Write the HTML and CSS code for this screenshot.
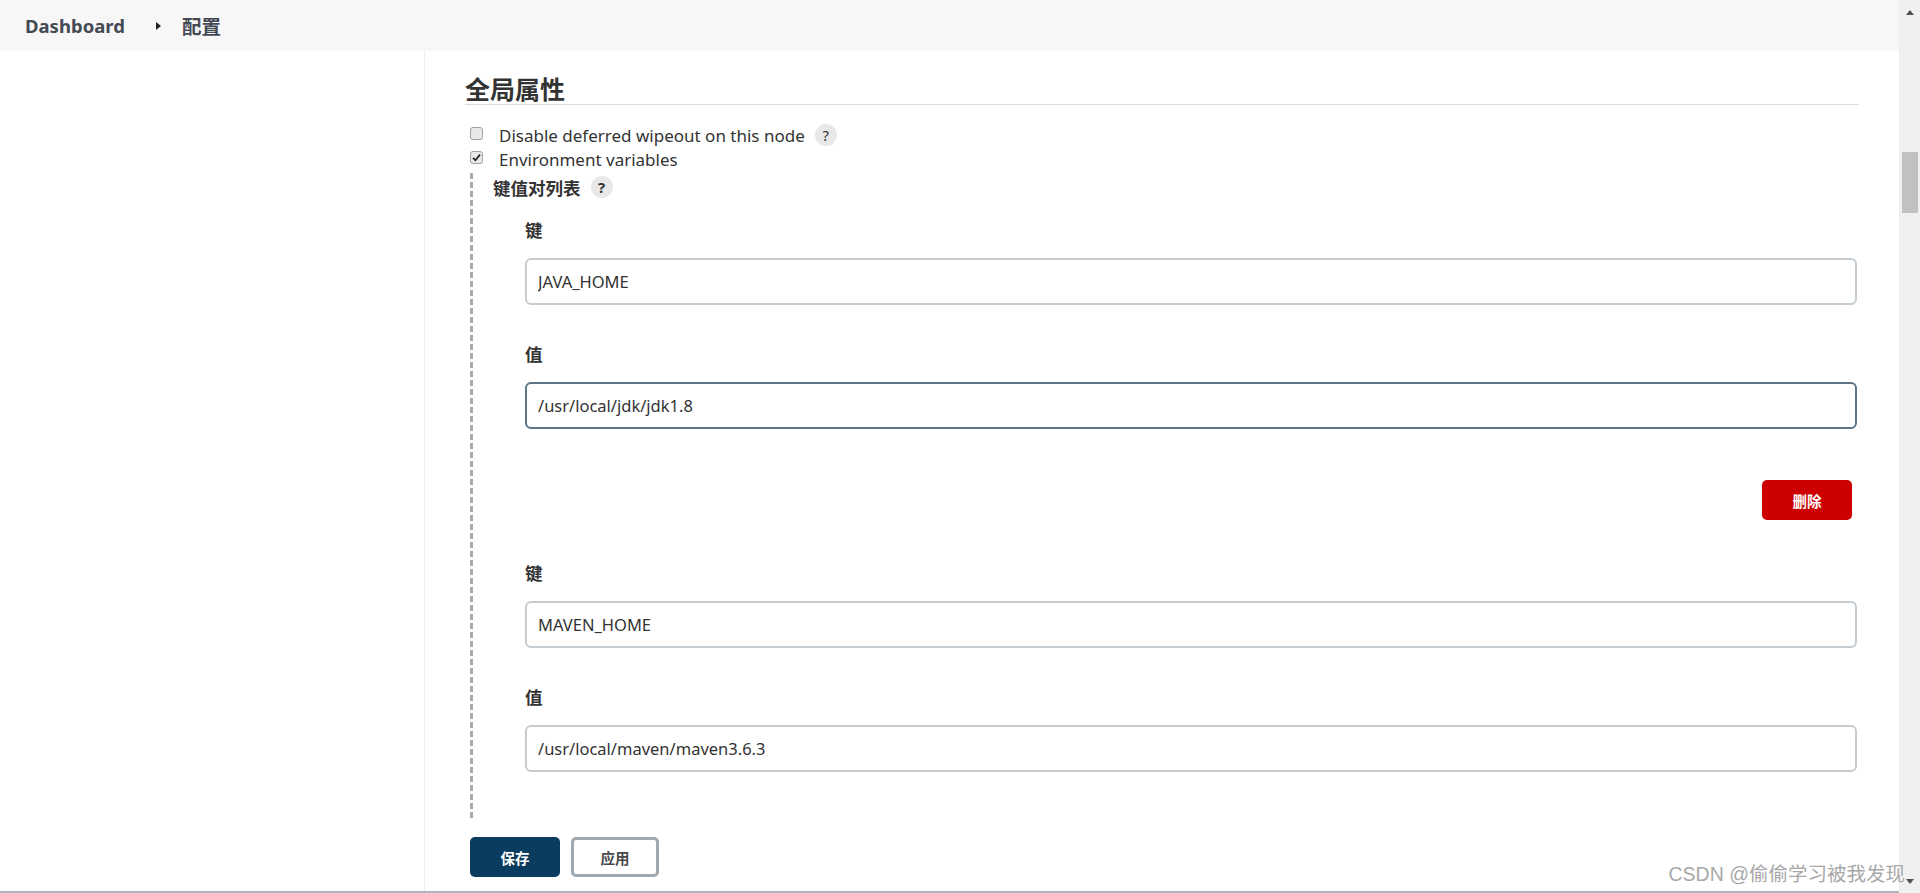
FILE: index.html
```html
<!DOCTYPE html>
<html lang="zh-CN">
<head>
<meta charset="utf-8">
<title>配置 [Jenkins]</title>
<link rel="stylesheet" href="styles.css">
</head>
<body>
<div class="page">
  <div class="app">
    <header class="topbar">
      <a class="crumb" href="#">Dashboard</a>
      <span class="crumb-sep"></span>
      <span class="crumb crumb-cjk">配置</span>
    </header>
    <div class="layout">
      <aside class="side"></aside>
      <main class="main">
        <h2 class="section-title">全局属性</h2>
        <div class="cb-row">
          <span class="cb"></span>
          <span class="cb-label">Disable deferred wipeout on this node</span>
          <span class="help">?</span>
        </div>
        <div class="cb-row">
          <span class="cb checked"><svg viewBox="0 0 13 13" width="13" height="13"><path d="M3 6.8 L5.4 9.2 L10 3.6" fill="none" stroke="#222" stroke-width="1.8"/></svg></span>
          <span class="cb-label">Environment variables</span>
        </div>
        <div class="nested">
          <div class="nested-title"><span>键值对列表</span><span class="help">?</span></div>
          <div class="entries">
            <div class="entry">
              <div class="field">
                <div class="field-label">键</div>
                <input class="text-input" type="text" value="JAVA_HOME">
              </div>
              <div class="field">
                <div class="field-label">值</div>
                <input class="text-input focused" type="text" value="/usr/local/jdk/jdk1.8">
              </div>
              <div class="entry-actions"><button class="btn btn-danger">删除</button></div>
            </div>
            <div class="entry entry-next">
              <div class="field">
                <div class="field-label">键</div>
                <input class="text-input" type="text" value="MAVEN_HOME">
              </div>
              <div class="field">
                <div class="field-label">值</div>
                <input class="text-input" type="text" value="/usr/local/maven/maven3.6.3">
              </div>
            </div>
          </div>
        </div>
        <div class="form-actions">
          <button class="btn btn-primary">保存</button>
          <button class="btn btn-secondary">应用</button>
        </div>
      </main>
    </div>
    <div class="bottom-line"></div>
  </div>
  <div class="scrollbar">
    <div class="sb-arrow sb-up"></div>
    <div class="sb-track"><div class="sb-thumb"></div></div>
    <div class="sb-arrow sb-down"></div>
  </div>
  <div class="watermark">CSDN @偷偷学习被我发现</div>
</div>
</body>
</html>
```
FILE: styles.css
```css
* { box-sizing: border-box; }
html, body { margin: 0; padding: 0; }
body {
  font-family: "Noto Sans", "Noto Sans CJK SC", sans-serif;
  color: #333;
  background: #fff;
  overflow: hidden;
}
.page {
  position: relative;
  display: flex;
  width: 1920px;
  height: 893px;
}
.app {
  flex: 1;
  display: flex;
  flex-direction: column;
  min-width: 0;
}
.topbar {
  height: 51px;
  flex: none;
  background: #f7f7f7;
  display: flex;
  align-items: center;
  padding-left: 25px;
}
.crumb {
  font-family: "Noto Sans", "Noto Sans CJK SC", sans-serif;
  font-size: 18.5px;
  font-weight: 700;
  color: #444a54;
  text-decoration: none;
  line-height: 24px;
}
.crumb-cjk {
  font-family: "Noto Sans CJK SC", sans-serif;
  font-size: 19.5px;
  font-weight: 700;
}
.crumb-sep {
  width: 0;
  height: 0;
  border-top: 4px solid transparent;
  border-bottom: 4px solid transparent;
  border-left: 5px solid #222;
  margin: 0 21px 0 31px;
}
.layout {
  flex: 1;
  display: flex;
  min-height: 0;
}
.side {
  width: 425px;
  flex: none;
  border-right: 1px solid #ececec;
}
.main {
  flex: 1;
  padding: 23px 40px 0 40px;
  min-width: 0;
}
.section-title {
  margin: 0;
  font-family: "Noto Sans CJK SC", sans-serif;
  font-size: 25px;
  font-weight: 700;
  line-height: 28px;
  padding-bottom: 2px;
  border-bottom: 1px solid #dcdcdc;
  color: #333;
}
.cb-row {
  display: flex;
  align-items: center;
  height: 24px;
}
.section-title + .cb-row { margin-top: 18px; }
.cb {
  width: 13px;
  height: 13px;
  margin-left: 5px;
  border: 1px solid #a0a0a0;
  border-radius: 3px;
  background: #e9e9e9;
  display: flex;
  align-items: center;
  justify-content: center;
  position: relative;
  top: -2px;
}
.cb svg { display: block; margin: -1px; }
.cb-label {
  margin-left: 16px;
  font-size: 17px;
  line-height: 24px;
  color: #333;
  position: relative;
  top: 1px;
}
.help {
  width: 22px;
  height: 22px;
  border-radius: 50%;
  background: #e8e8e8;
  color: #333;
  font-family: "Noto Sans", sans-serif;
  font-size: 15px;
  line-height: 22px;
  text-align: center;
  margin-left: 10px;
}
.nested {
  margin-top: 2px;
  margin-left: 5px;
  border-left: 3px dashed #aaaaaa;
  padding: 2px 0 46px 20px;
}
.nested-title {
  display: flex;
  align-items: center;
  height: 24px;
  font-family: "Noto Sans CJK SC", sans-serif;
  font-size: 17.5px;
  font-weight: 700;
  color: #333;
}
.entries {
  padding-left: 32px;
  padding-right: 2px;
  margin-top: 19px;
}
.field + .field { margin-top: 37px; }
.field-label {
  font-family: "Noto Sans CJK SC", sans-serif;
  font-size: 17.5px;
  font-weight: 700;
  line-height: 24px;
  height: 24px;
  margin-bottom: 16px;
  color: #333;
}
.text-input {
  display: block;
  width: 100%;
  height: 47px;
  border: 2px solid #c4ccd2;
  border-radius: 6px;
  padding: 0 11px;
  font-family: "Noto Sans", sans-serif;
  font-size: 16.5px;
  color: #333;
  background: #fff;
  outline: none;
}
.text-input.focused { border-color: #5d7586; }
.entry-actions {
  display: flex;
  justify-content: flex-end;
  margin-top: 51px;
  padding-right: 5px;
}
.entry-next { margin-top: 41px; }
.btn {
  height: 40px;
  width: 90px;
  border-radius: 5px;
  font-family: "Noto Sans CJK SC", sans-serif;
  font-size: 14.5px;
  font-weight: 700;
  cursor: pointer;
  padding: 0;
}
.btn-danger {
  background: #cc0000;
  color: #fff;
  border: none;
}
.form-actions {
  display: flex;
  gap: 11px;
  margin-top: 19px;
  margin-left: 5px;
}
.btn-primary {
  background: #093c5e;
  color: #fff;
  border: none;
}
.btn-secondary {
  width: 88px;
  background: #fff;
  color: #4a4a4a;
  border: 3px solid #9ea9b1;
}
.bottom-line {
  height: 2px;
  flex: none;
  background: #aeb7be;
}
.scrollbar {
  width: 21px;
  flex: none;
  background: #f0f0f0;
  display: flex;
  flex-direction: column;
  align-items: center;
}
.sb-arrow {
  height: 25px;
  width: 21px;
  display: flex;
  align-items: center;
  justify-content: center;
  flex: none;
}
.sb-up::before {
  content: "";
  border-left: 4px solid transparent;
  border-right: 4px solid transparent;
  border-bottom: 5px solid #505050;
}
.sb-down::before {
  content: "";
  border-left: 4px solid transparent;
  border-right: 4px solid transparent;
  border-top: 5px solid #505050;
}
.sb-down { height: 24px; }
.sb-track {
  flex: 1;
  width: 21px;
  padding: 127px 2px 0 3px;
}
.sb-thumb {
  height: 61px;
  background: #c1c1c1;
}
.watermark {
  position: absolute;
  right: 15px;
  bottom: 7px;
  font-family: "Liberation Sans", "Noto Sans CJK SC", sans-serif;
  font-size: 19.5px;
  line-height: 24px;
  color: #a8a8a8;
  white-space: nowrap;
}
```
